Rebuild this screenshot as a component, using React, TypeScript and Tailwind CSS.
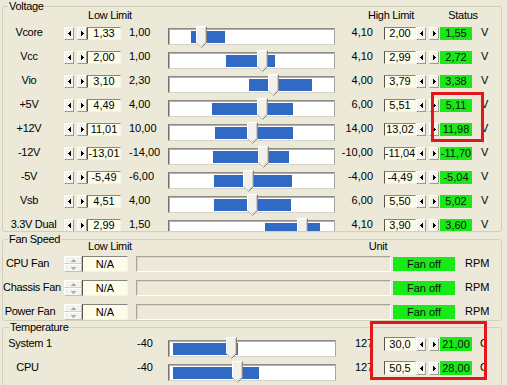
import type { CSSProperties } from "react";

type VRow = {
  name: string;
  low: string;
  lowLim: string;
  highLim: string;
  high: string;
  status: string;
  sel: [number, number];
  thumb: number;
  pr?: string;
};

const volts: VRow[] = [
  { name: "Vcore", low: "1,33", lowLim: "1,00", highLim: "4,10", high: "2,00", status: "1,55", sel: [191, 225], thumb: 196 },
  { name: "Vcc", low: "2,00", lowLim: "1,00", highLim: "4,10", high: "2,99", status: "2,72", sel: [226, 275], thumb: 257 },
  { name: "Vio", low: "3,10", lowLim: "2,30", highLim: "4,00", high: "3,79", status: "3,38", sel: [249, 312], thumb: 268 },
  { name: "+5V", low: "4,49", lowLim: "4,00", highLim: "6,00", high: "5,51", status: "5,11", sel: [212, 293], thumb: 257 },
  { name: "+12V", low: "11,01", lowLim: "10,00", highLim: "14,00", high: "13,02", status: "11,98", sel: [215, 293], thumb: 247 },
  { name: "-12V", low: "-13,01", lowLim: "-14,00", highLim: "-10,00", high: "-11,04", status: "-11,70", sel: [213, 289], thumb: 258 },
  { name: "-5V", low: "-5,49", lowLim: "-6,00", highLim: "-4,00", high: "-4,49", status: "-5,04", sel: [214, 292], thumb: 243 },
  { name: "Vsb", low: "4,51", lowLim: "4,00", highLim: "6,00", high: "5,50", status: "5,02", sel: [214, 291], thumb: 247 },
  { name: "3.3V Dual", low: "2,99", lowLim: "1,50", highLim: "4,10", high: "3,90", status: "3,60", sel: [265, 320], thumb: 297, pr: "pr-0" },
];

const fans = [
  { name: "CPU Fan", pr: "pr-[12px]" },
  { name: "Chassis Fan", pr: "pr-[7px]" },
  { name: "Power Fan", pr: "pr-[7px]" },
];

const temps = [
  { name: "System 1", pr: "pr-[7px]", box: "30,0", status: "21,00", sel: [173, 238] as [number, number], thumb: 226 },
  { name: "CPU", pr: "pr-[12px]", box: "50,5", status: "28,00", sel: [173, 259] as [number, number], thumb: 232 },
];

const arrows: Record<string, string> = {
  l: "M2 0h1v5H2zM1 1h1v3H1zM0 2h1v1H0z",
  r: "M0 0h1v5H0zM1 1h1v3H1zM2 2h1v1H2z",
  u: "M0 2h5v1H0zM1 1h3v1H1zM2 0h1v1H2z",
  d: "M0 0h5v1H0zM1 1h3v1H1zM2 2h1v1H2z",
};

const Arrow = ({ dir, color = "#000" }: { dir: "l" | "r" | "u" | "d"; color?: string }) => {
  const wide = dir === "u" || dir === "d";
  return (
    <svg width={wide ? 5 : 3} height={wide ? 3 : 5} viewBox={wide ? "0 0 5 3" : "0 0 3 5"}>
      <path d={arrows[dir]} fill={color} />
    </svg>
  );
};

const Btn = ({ dir }: { dir: "l" | "r" }) => (
  <div className="flex h-[13px] w-[10px] shrink-0 items-center justify-center border border-t-white border-l-white border-b-[#9d9b90] border-r-[#9d9b90] bg-[#f4f3ee]">
    <Arrow dir={dir} />
  </div>
);

const Box = ({ v, cls }: { v: string; cls: string }) => (
  <div
    className={`flex shrink-0 items-center justify-center overflow-hidden whitespace-nowrap border border-t-[#85847e] border-l-[#55544f] border-b-[#f4f3ec] border-r-[#f4f3ec] bg-[#fdfce9] leading-none ${cls}`}
  >
    {v}
  </div>
);

const Thumb = ({ style }: { style: CSSProperties }) => (
  <svg className="absolute" width="11" height="22" viewBox="0 0 11 22" style={style}>
    <path d="M0.5 0.5H10.5V16.5L5.5 21.5L0.5 16.5Z" fill="#f1f0ea" />
    <path d="M0.5 16.5V0.5H10" stroke="#ffffff" fill="none" />
    <path d="M9.5 1.5V16L5.5 20" stroke="#cfcdc2" fill="none" />
    <path d="M0.5 16.5L5.5 21.5" stroke="#c3c1b6" fill="none" />
    <path d="M10.5 0.5V16.5L5.5 21.5" stroke="#86857c" fill="none" />
  </svg>
);

const Track = ({ w, sel, thumb, top }: { w: string; sel: [number, number]; thumb: number; top: number }) => (
  <div
    className={`relative h-[17px] shrink-0 border border-t-[#8c8b85] border-l-[#74736d] border-r-[#a9a89f] border-b-[#d6d4c8] bg-white shadow-[inset_1px_1px_0_#b4b3ab] ${w}`}
  >
    <div className="absolute top-[2px] h-[12px] bg-[#316ac5]" style={{ left: sel[0] - 169, width: sel[1] - sel[0] }} />
    <Thumb style={{ left: thumb - 169, top }} />
  </div>
);

const Green = ({ v, cls }: { v: string; cls: string }) => (
  <div className={`flex shrink-0 items-center justify-center whitespace-nowrap bg-[#18ea18] leading-none text-[#111] ${cls}`}>{v}</div>
);

export default function App() {
  return (
    <div className="relative h-[385px] w-[507px] overflow-hidden bg-[#ece9d8] font-['Liberation_Sans',Arial,sans-serif] text-[11px] text-black">
      {/* Voltage */}
      <fieldset className="ml-[2px] w-[500px] rounded-[3px] border border-[#d0d0bf]">
        <legend className="ml-[5px] px-[1px] leading-[13px] tracking-[-0.3px]">Voltage</legend>
        <div className="-mt-[4px] flex h-[13px] leading-[13px] tracking-[-0.3px]">
          <div className="w-[61px] shrink-0" />
          <div className="w-[92px] shrink-0 text-center">Low Limit</div>
          <div className="w-[185px] shrink-0" />
          <div className="w-[100px] shrink-0 text-center">High Limit</div>
          <div className="w-[44px] shrink-0 text-center">Status</div>
        </div>
        <div className="mt-[4px] h-[205px] overflow-hidden">
          {volts.map((r) => (
            <div key={r.name} className="flex h-[24px] items-start">
              <div className={`w-[61px] shrink-0 whitespace-nowrap text-center leading-[12px] tracking-[-0.3px] ${r.pr ?? "pr-[9px]"}`}>
                {r.name}
              </div>
              <div className="mt-[1px] flex shrink-0">
                <Btn dir="l" />
                <div className="ml-[3px]">
                  <Btn dir="r" />
                </div>
              </div>
              <Box v={r.low} cls="mt-[1px] h-[13px] w-[34px]" />
              <div className="ml-[8px] w-[39px] shrink-0 whitespace-nowrap leading-[13px]">{r.lowLim}</div>
              <div className="mt-[2px]">
                <Track w="w-[167px]" sel={r.sel} thumb={r.thumb} top={-3} />
              </div>
              <div className="w-[38px] shrink-0 whitespace-nowrap text-right leading-[12px]">{r.highLim}</div>
              <Box v={r.high} cls="ml-[11px] mt-[1px] h-[13px] w-[32px]" />
              <div className="mt-[1px] flex shrink-0">
                <Btn dir="l" />
                <div className="ml-[3px]">
                  <Btn dir="r" />
                </div>
              </div>
              <Green v={r.status} cls="ml-[1px] mt-[1px] h-[13px] w-[32px]" />
              <div className="ml-[9px] leading-[13px]">V</div>
            </div>
          ))}
        </div>
      </fieldset>

      {/* Fan Speed */}
      <fieldset className="ml-[2px] mt-[1px] w-[500px] rounded-[3px] border border-[#d0d0bf]">
        <legend className="ml-[5px] px-[1px] leading-[13px] tracking-[-0.3px]">Fan Speed</legend>
        <div className="-mt-[6px] flex h-[13px] leading-[13px] tracking-[-0.3px]">
          <div className="w-[61px] shrink-0" />
          <div className="w-[92px] shrink-0 text-center">Low Limit</div>
          <div className="w-[192px] shrink-0" />
          <div className="w-[60px] shrink-0 text-center">Unit</div>
        </div>
        <div className="mt-[3px] h-[64px] overflow-hidden">
          {fans.map((f) => (
            <div key={f.name} className="flex h-[24px] items-start">
              <div className={`mt-[1px] w-[61px] shrink-0 whitespace-nowrap text-center leading-[13px] tracking-[-0.3px] ${f.pr}`}>
                {f.name}
              </div>
              <div className="flex h-[16px] w-[18px] shrink-0 flex-col">
                <div className="flex h-[8px] items-center justify-center border border-t-white border-l-white border-b-[#d2d0c4] border-r-[#c4c2b6] bg-[#f3f2ec]">
                  <Arrow dir="u" color="#aeac9f" />
                </div>
                <div className="flex h-[8px] items-center justify-center border border-t-white border-l-white border-b-[#c4c2b6] border-r-[#c4c2b6] bg-[#f3f2ec]">
                  <Arrow dir="d" color="#aeac9f" />
                </div>
              </div>
              <Box v="N/A" cls="h-[16px] w-[46px]" />
              <div className="ml-[8px] h-[16px] w-[255px] shrink-0 border border-t-[#a7a497] border-l-[#a7a497] border-b-white border-r-white shadow-[inset_1px_1px_0_#dcd9ca]" />
              <Green v="Fan off" cls="ml-[2px] mt-[1px] h-[14px] w-[62px]" />
              <div className="ml-[10px] mt-[1px] leading-[13px]">RPM</div>
            </div>
          ))}
        </div>
      </fieldset>

      {/* Temperature */}
      <fieldset className="ml-[2px] w-[500px] rounded-[3px] border border-[#d0d0bf]">
        <legend className="ml-[6px] px-[1px] leading-[13px] tracking-[-0.3px]">Temperature</legend>
        <div className="mt-[3px]">
          {temps.map((t) => (
            <div key={t.name} className="flex h-[24px] items-start">
              <div className={`w-[61px] shrink-0 whitespace-nowrap text-center leading-[12px] tracking-[-0.3px] ${t.pr}`}>
                {t.name}
              </div>
              <div className="ml-[73px] w-[31px] shrink-0 leading-[12px]">-40</div>
              <div className="mt-[3px]">
                <Track w="w-[168px]" sel={t.sel} thumb={t.thumb} top={-4} />
              </div>
              <div className="ml-[19px] w-[16px] shrink-0 overflow-hidden whitespace-nowrap leading-[12px]">127</div>
              <Box v={t.box} cls="ml-[13px] h-[14px] w-[32px]" />
              <div className="mt-[1px] flex shrink-0">
                <Btn dir="l" />
                <div className="ml-[3px]">
                  <Btn dir="r" />
                </div>
              </div>
              <Green v={t.status} cls="ml-[1px] h-[14px] w-[32px]" />
              <div className="ml-[8px] w-[4px] shrink-0 overflow-hidden leading-[13px]">C</div>
            </div>
          ))}
        </div>
      </fieldset>

      {/* annotations */}
      <div className="absolute left-[431px] top-[92px] h-[50px] w-[53px] border-[3px] border-[#e3161b]" />
      <div className="absolute left-[370px] top-[321px] h-[59px] w-[117px] border-[3px] border-[#e3161b]" />
    </div>
  );
}
